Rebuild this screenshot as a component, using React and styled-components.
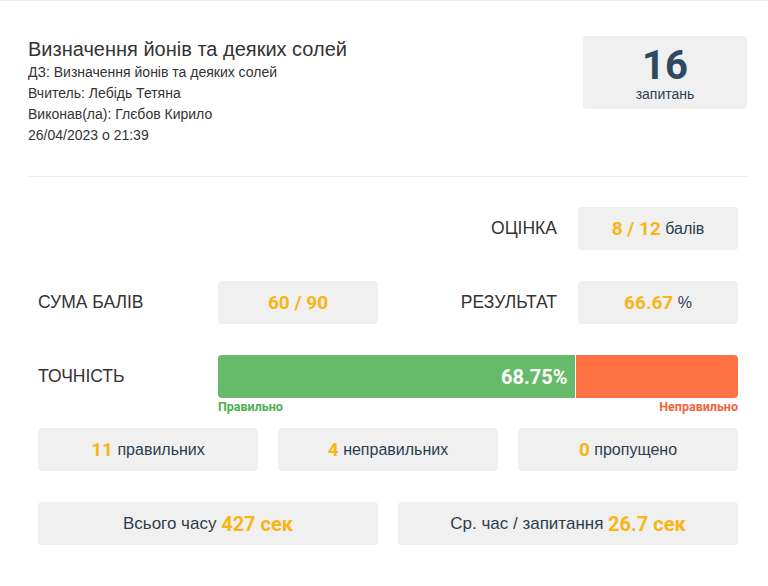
import React from 'react'
import styled, { createGlobalStyle } from 'styled-components'

const GlobalStyle = createGlobalStyle`
  body {
    margin: 0;
    background: #fff;
    font-family: "Liberation Sans", Arial, sans-serif;
    color: #333;
  }
`

const result = {
  title: 'Визначення йонів та деяких солей',
  homework: 'Визначення йонів та деяких солей',
  teacher: 'Лебідь Тетяна',
  student: 'Глєбов Кирило',
  date: '26/04/2023 о 21:39',
  questions: 16,
  correct: 11,
  wrong: 4,
  skipped: 0,
}

function App() {
  const accuracy = 68.75

  return (
    <Page>
      <GlobalStyle />
      <Header>
        <Info>
          <Title>{result.title}</Title>
          <Line>ДЗ: {result.homework}</Line>
          <Line>Вчитель: {result.teacher}</Line>
          <Line>Виконав(ла): {result.student}</Line>
          <Line>{result.date}</Line>
        </Info>
        <QuestionsBox>
          <BigNumber>{result.questions}</BigNumber>
          <Caption>запитань</Caption>
        </QuestionsBox>
      </Header>
      <Divider />

      <Stats>
        <Label $col={3} $right>Оцінка</Label>
        <ValueBox>
          <Num>8 / 12</Num> балів
        </ValueBox>

        <Label>Сума балів</Label>
        <ValueBox>
          <Num>60 / 90</Num>
        </ValueBox>
        <Label $right>Результат</Label>
        <ValueBox>
          <Num>66.67</Num> %
        </ValueBox>

        <Label>Точність</Label>
        <Accuracy>
          <Bar>
            <Correct style={{ width: `${accuracy}%` }}>{accuracy}%</Correct>
            <Wrong />
          </Bar>
          <Legend>
            <LegendText $ok>Правильно</LegendText>
            <LegendText>Неправильно</LegendText>
          </Legend>
        </Accuracy>
      </Stats>

      <Counts>
        <ValueBox>
          <Num>{result.correct}</Num> правильних
        </ValueBox>
        <ValueBox>
          <Num>{result.wrong}</Num> неправильних
        </ValueBox>
        <ValueBox>
          <Num>{result.skipped}</Num> пропущено
        </ValueBox>
      </Counts>

      <Times>
        <TimeBox>
          Всього часу <TimeNum>427 сек</TimeNum>
        </TimeBox>
        <TimeBox>
          Ср. час / запитання <TimeNum>26.7 сек</TimeNum>
        </TimeBox>
      </Times>
    </Page>
  )
}

export default App

const Page = styled.div`
  border-top: 1px solid #eee;
  padding-top: 36px;
  padding-bottom: 40px;
`

const Header = styled.div`
  display: flex;
  justify-content: space-between;
  align-items: flex-start;
  padding: 0 21px 0 28px;
`

const Info = styled.div`
  display: flex;
  flex-direction: column;
`

const Title = styled.div`
  font-size: 20px;
  line-height: 25px;
  color: #333;
`

const Line = styled.div`
  font-size: 14px;
  line-height: 21px;
  color: #333;
`

const QuestionsBox = styled.div`
  width: 164px;
  height: 73px;
  margin-top: -1px;
  background: #f0f0f0;
  border-radius: 4px;
  display: flex;
  flex-direction: column;
  align-items: center;
  justify-content: center;
  color: #2f4a60;
`

const BigNumber = styled.div`
  font-family: Roboto, "Liberation Sans", sans-serif;
  font-weight: 700;
  font-size: 40px;
  line-height: 42px;
`

const Caption = styled.div`
  font-size: 14px;
  line-height: 14px;
  color: #2c3e50;
`

const Divider = styled.div`
  height: 1px;
  background: #eee;
  margin: 30px 20px 30px 28px;
`

const Stats = styled.div`
  display: grid;
  grid-template-columns: repeat(4, 160px);
  column-gap: 20px;
  row-gap: 31px;
  padding: 0 38px;
`

const Label = styled.div`
  grid-column: ${(p) => p.$col || 'auto'};
  height: 43px;
  display: flex;
  align-items: center;
  justify-content: ${(p) => (p.$right ? 'flex-end' : 'flex-start')};
  padding-right: ${(p) => (p.$right ? '1px' : '0')};
  font-size: 17.5px;
  text-transform: uppercase;
  color: #333;
`

const ValueBox = styled.div`
  height: 43px;
  background: #f0f0f0;
  border-radius: 4px;
  display: flex;
  align-items: center;
  justify-content: center;
  font-size: 16px;
  color: #2c3e50;
  white-space: pre;
`

const Num = styled.span`
  font-family: Roboto, "Liberation Sans", sans-serif;
  font-weight: 700;
  font-size: 19px;
  color: #f7b516;
`

const Accuracy = styled.div`
  grid-column: 2 / span 3;
`

const Bar = styled.div`
  display: flex;
  height: 43px;
  border-radius: 4px;
  overflow: hidden;
`

const Correct = styled.div`
  background: #66bb6a;
  border-right: 1px solid #fff;
  display: flex;
  align-items: center;
  justify-content: flex-end;
  padding-right: 7px;
  box-sizing: border-box;
  font-family: Roboto, "Liberation Sans", sans-serif;
  font-weight: 700;
  font-size: 20px;
  color: #fff;
`

const Wrong = styled.div`
  flex: 1;
  background: #ff7043;
`

const Legend = styled.div`
  display: flex;
  justify-content: space-between;
  margin-top: 1px;
`

const LegendText = styled.span`
  font-family: Roboto, "Liberation Sans", sans-serif;
  font-weight: 700;
  font-size: 12.5px;
  line-height: 16px;
  color: ${(p) => (p.$ok ? '#4caf50' : '#f4623a')};
`

const Counts = styled.div`
  display: grid;
  grid-template-columns: repeat(3, 220px);
  column-gap: 20px;
  padding: 0 38px;
  margin-top: 13px;
`

const Times = styled.div`
  display: grid;
  grid-template-columns: repeat(2, 340px);
  column-gap: 20px;
  padding: 0 38px;
  margin-top: 31px;
`

const TimeBox = styled(ValueBox)`
  font-size: 17px;
`

const TimeNum = styled.span`
  font-family: Roboto, "Liberation Sans", sans-serif;
  font-weight: 700;
  font-size: 20px;
  color: #f7b516;
`
